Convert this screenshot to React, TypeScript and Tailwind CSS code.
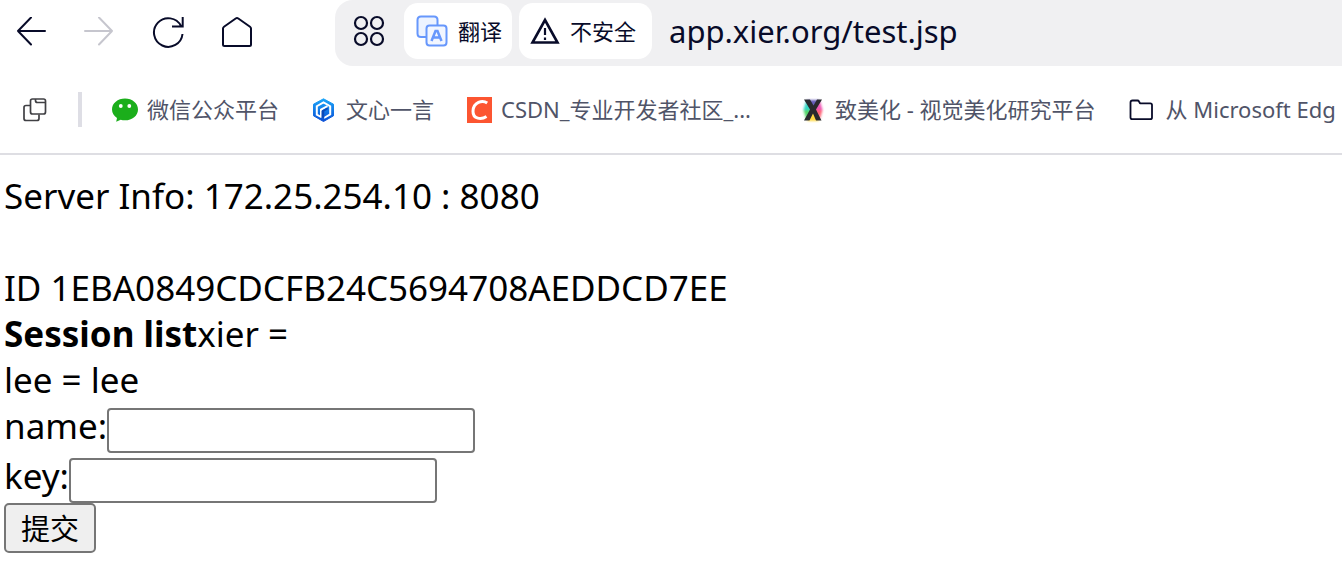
import { useState } from 'react'

interface Bookmark {
  id: string
  icon: React.ReactNode
  label: string
  className: string
}

const WechatIcon = () => (
  <svg viewBox="0 0 26 26" className="size-[26px] shrink-0" aria-hidden="true">
    <path d="M13 1.500c7.200 0 13 4.800 13 10.900S20.200 23.300 13 23.300c-1.500 0-3-.2-4.300-.6L4.200 24.700l.8-3.800C1.900 18.900 0 15.900 0 12.400 0 6.300 5.800 1.500 13 1.500z" fill="#1bae1b" />
    <circle cx="8.800" cy="9" r="1.900" fill="#fff" />
    <circle cx="17.300" cy="9" r="1.900" fill="#fff" />
  </svg>
)

const WenxinIcon = () => (
  <svg viewBox="0 0 26 26" className="size-[26px] shrink-0" aria-hidden="true">
    <defs>
      <linearGradient id="wenxin" x1="0" y1="0" x2="0" y2="1">
        <stop offset="0" stopColor="#1ba5f8" />
        <stop offset="1" stopColor="#0a4fd6" />
      </linearGradient>
    </defs>
    <path d="M12.500 1.800 22.500 7.200v11.600L12.500 24.500 2.500 18.800V7.200z" fill="url(#wenxin)" stroke="url(#wenxin)" strokeLinejoin="round" />
    <path d="M10 20 5.800 17.600V9.200L12.500 5.300l6.700 3.900v8.200L13 21" fill="none" stroke="#fff" strokeWidth="2" />
    <path d="M10 20.500v-7.800l6.500-3.500" fill="none" stroke="#fff" strokeWidth="2" />
    <path d="M10.500 20.500v-6.800l5.700-3.200 1 1.400-4 2.600v6.500z" fill="#0b48b8" />
  </svg>
)

const CsdnIcon = () => (
  <svg viewBox="0 0 26 26" className="size-[26px] shrink-0" aria-hidden="true">
    <path d="M1 0h25v26H1z" fill="#fc5531" />
    <path d="M21.200 6.100C16.500 2.800 7.400 5 7 14.200c-.2 8.200 8.500 8.500 13.500 5.300" fill="none" stroke="#fff" strokeWidth="3" />
  </svg>
)

const ZhutixIcon = () => (
  <svg viewBox="0 0 26 26" className="size-[26px] shrink-0" aria-hidden="true">
    <defs>
      <filter id="glow"><feGaussianBlur stdDeviation="1" /></filter>
    </defs>
    <g filter="url(#glow)">
      <path d="M13 13 6 3h14z" fill="#665bb8" />
      <path d="m13 13-7-9-2.500 9z" fill="#35d7c5" />
      <path d="M13 13H3.500L6 22z" fill="#54d66a" />
      <path d="m13 13 7-9 2.500 9z" fill="#ef54b5" />
      <path d="M13 13h9.500L20 22z" fill="#ff6374" />
      <path d="M13 13 7 24h12z" fill="#ffd83c" />
    </g>
    <path d="M4 2.500h6l3.500 6L17 2.500h5l-6 10 5.500 11H16l-3-7-3.500 7H4l6-11z" fill="#292a2d" />
  </svg>
)

const FolderIcon = () => (
  <svg viewBox="0 0 26 26" className="size-[26px] shrink-0" fill="none" stroke="#080b29" strokeWidth="1.800" strokeLinejoin="round" aria-hidden="true">
    <path d="M2.500 20.500v-15q0-2 2-2h5q1 0 1.500 1l1 1.800h10.300q1.700 0 1.700 1.700v12.500q0 1.700-1.700 1.700H4.200q-1.700 0-1.700-1.700z" />
  </svg>
)

const bookmarks: Bookmark[] = [
  { id: 'wechat', icon: <WechatIcon />, label: '微信公众平台', className: 'gap-[9px]' },
  { id: 'wenxin', icon: <WenxinIcon />, label: '文心一言', className: 'gap-[9px]' },
  { id: 'csdn', icon: <CsdnIcon />, label: 'CSDN_专业开发者社区_...', className: 'w-[302px] gap-[9px]' },
  { id: 'zhutix', icon: <ZhutixIcon />, label: '致美化 - 视觉美化研究平台', className: 'gap-[9px]' },
  { id: 'edge', icon: <FolderIcon />, label: '从 Microsoft Edg', className: 'gap-3' },
]

function Toolbar() {
  const [url, setUrl] = useState('app.xier.org/test.jsp')

  return (
    <div className="flex h-[66px] items-center">
      <div className="flex w-[335px] shrink-0 items-center gap-9 pl-4 text-[#080b29]">
        <button aria-label="Back" className="size-8">
          <svg viewBox="0 0 32 32" className="size-8" fill="none" stroke="currentColor" strokeWidth="2" strokeLinecap="round" strokeLinejoin="round">
            <path d="M29 14H2M15 0.500 2 14l13 13.500" />
          </svg>
        </button>
        <button aria-label="Forward" disabled className="size-8 text-[#c6c6ce]">
          <svg viewBox="0 0 32 32" className="size-8" fill="none" stroke="currentColor" strokeWidth="2" strokeLinecap="round" strokeLinejoin="round">
            <path d="M1 14h27M15 0.500 28 14 15 27.500" />
          </svg>
        </button>
        <button aria-label="Reload" className="size-8">
          <svg viewBox="0 0 32 32" className="size-8" fill="none" stroke="currentColor" strokeWidth="2">
            <path d="M30.500 17A14.300 14.300 0 1 1 29 9M30.700 0v9.500H20" />
          </svg>
        </button>
        <button aria-label="Home" className="size-8">
          <svg viewBox="0 0 32 32" className="size-8" fill="none" stroke="currentColor" strokeWidth="2" strokeLinejoin="round">
            <path d="M4.500 29q-1.500 0-1.500-1.500V11.500Q3 10.500 4 9.800L15.700 1.500q1.300-.9 2.600 0L30 9.800q1 .7 1 1.700v16q0 1.500-1.500 1.500z" />
          </svg>
        </button>
      </div>

      {/* Address bar */}
      <div className="flex h-full min-w-0 flex-1 items-center rounded-l-[18px] bg-[#f0f0f2] pb-1 pl-[18px] text-[#080b29]">
        <button aria-label="Apps" className="mr-[19px] size-8 shrink-0">
          <svg viewBox="0 0 32 32" className="size-8" fill="none" stroke="currentColor" strokeWidth="2.200">
            <circle cx="8" cy="8" r="6" />
            <circle cx="24" cy="8" r="6" />
            <circle cx="8" cy="24" r="6" />
            <circle cx="24" cy="24" r="6" />
          </svg>
        </button>
        <button className="mr-[7px] flex h-14 shrink-0 items-center gap-[10px] rounded-[14px] bg-white pr-[10px] pl-3 text-[22px]">
          <svg viewBox="0 0 32 32" className="size-8" fill="none" stroke="#6797fc" strokeWidth="2" aria-hidden="true">
            <path d="M10.500 22H5q-3.500 0-3.500-3.500V5Q1.500 1.500 5 1.500h13Q21.500 1.500 21.500 5v5" fill="#edf3ff" />
            <rect x="10.500" y="10.500" width="20" height="20" rx="3" fill="#f2f6ff" />
            <path d="m15.500 26 4-10h2l4 10m-8-3.500h6" strokeWidth="2.500" />
          </svg>
          翻译
        </button>
        <button className="flex h-14 shrink-0 items-center gap-[9px] rounded-[14px] bg-white pr-4 pl-[10px] text-[22px]">
          <svg viewBox="0 0 32 32" className="size-8" fill="none" stroke="currentColor" strokeWidth="2.600" aria-hidden="true">
            <path d="M16 5 28.500 27.500h-25z" />
            <path d="M16 13v7M16 22.500v2.500" strokeWidth="2.200" />
          </svg>
          不安全
        </button>
        <input
          aria-label="Address"
          value={url}
          onChange={e => setUrl(e.target.value)}
          className="ml-[17px] h-12 min-w-0 flex-1 bg-transparent text-[31px] outline-none"
        />
      </div>
    </div>
  )
}

function BookmarkBar() {
  return (
    <nav className="flex h-[89px] items-center overflow-hidden border-b-2 border-[#dedee3] pl-[22px] text-[22px] whitespace-nowrap text-[#505468]">
      <button aria-label="Collections" className="size-[26px] shrink-0">
        <svg viewBox="0 0 26 26" className="size-[26px]" fill="none" stroke="#404044" strokeWidth="1.700">
          <path d="M8 8.500H4q-2 0-2 2v11q0 2 2 2h11q2 0 2-2v-4" />
          <rect x="8.500" y="2" width="15" height="15" rx="2" />
          <path d="M13.500 2v1.500q0 2 2 2h8" />
        </svg>
      </button>
      <span className="ml-[30px] h-[35px] w-1 shrink-0 bg-[#dedee5]" />
      <div className="ml-[30px] flex items-center gap-8">
        {bookmarks.map(item => (
          <a key={item.id} href="#" className={`flex shrink-0 items-center ${item.className}`}>
            {item.icon}
            <span>{item.label}</span>
          </a>
        ))}
      </div>
    </nav>
  )
}

export default function App() {
  const [name, setName] = useState('')
  const [key, setKey] = useState('')

  return (
    <div className="min-h-screen overflow-hidden bg-white font-['Noto_Sans','Noto_Sans_CJK_SC',sans-serif]">
      <Toolbar />
      <BookmarkBar />

      <main className="px-1 pt-[18px] text-[35px] leading-[46px] text-black">
        <p>Server Info: 172.25.254.10 : 8080</p>
        <br />
        <p>ID 1EBA0849CDCFB24C5694708AEDDCD7EE</p>
        <p><b>Session list</b>xier = </p>
        <p>lee = lee</p>
        <form onSubmit={e => e.preventDefault()}>
          <div className="flex h-[50px] items-end">
            <label htmlFor="name" className="pb-1">name:</label>
            <input
              id="name"
              value={name}
              onChange={e => setName(e.target.value)}
              className="h-[45px] w-[368px] rounded border-2 border-[#767676] bg-white px-1 text-[28px]"
            />
          </div>
          <div className="flex h-[50px] items-end">
            <label htmlFor="key" className="pb-1">key:</label>
            <input
              id="key"
              value={key}
              onChange={e => setKey(e.target.value)}
              className="h-[45px] w-[368px] rounded border-2 border-[#767676] bg-white px-1 text-[28px]"
            />
          </div>
          <button type="submit" className="block h-[50px] w-[92px] rounded-[5px] border-2 border-[#767676] bg-[#efefef] text-[29px] leading-none">
            提交
          </button>
        </form>
      </main>
    </div>
  )
}
